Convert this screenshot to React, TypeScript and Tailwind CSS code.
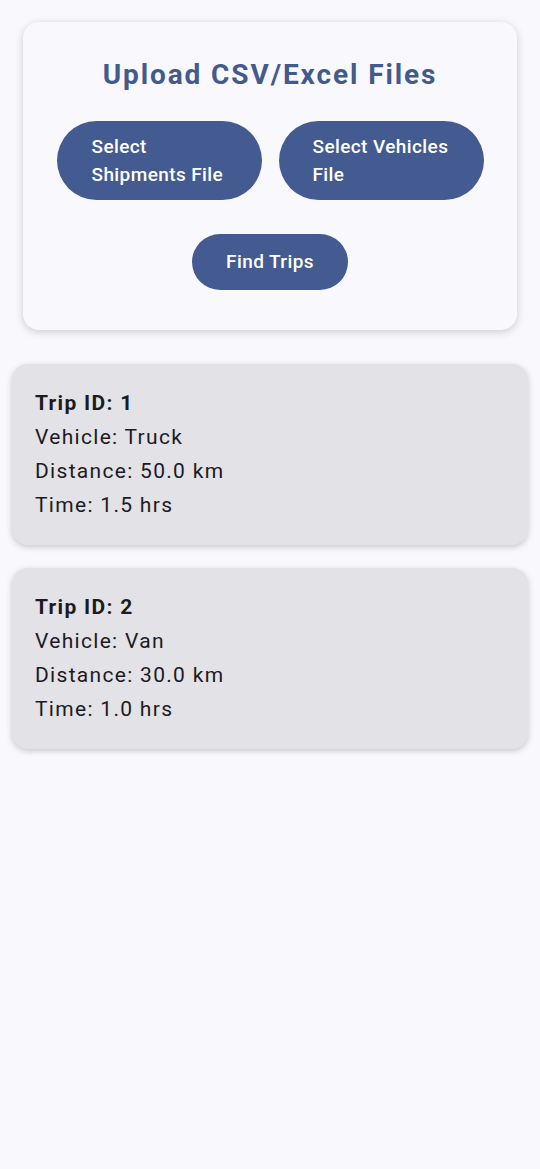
import React from 'react';

type Trip = { id: number; vehicle: string; distance: string; time: string };

const TRIPS: Trip[] = [
  { id: 1, vehicle: 'Truck', distance: '50.0 km', time: '1.5 hrs' },
  { id: 2, vehicle: 'Van', distance: '30.0 km', time: '1.0 hrs' },
];

const App: React.FC = () => {
  return (
    <div className="min-h-[1169px] w-full bg-[#f9f8fd] px-3 pt-[22px] font-['Roboto',sans-serif]">
      {/* Upload panel */}
      <div className="mx-[11px] rounded-[16px] bg-[#f9f8fd] px-[33px] pt-[36px] pb-[40px] shadow-[0_2px_8px_rgba(0,0,0,0.18)]">
        <h1 className="text-center text-[28px] leading-[34px] font-bold tracking-[1.9px] text-[#425a8c]">Upload CSV/Excel Files</h1>
        <div className="mt-[29px] flex justify-center gap-[17px]">
          <button className="h-[79px] w-[205px] rounded-full bg-[#435b91] pl-[35px] pr-4 text-left text-[19px] leading-[28px] font-medium tracking-[0.4px] text-white">
            Select<br />Shipments File
          </button>
          <button className="h-[79px] w-[205px] rounded-full bg-[#435b91] pl-[34px] pr-2 text-left text-[19px] leading-[28px] font-medium tracking-[0.4px] text-white">
            Select Vehicles<br />File
          </button>
        </div>
        <div className="mt-[34px] flex justify-center">
          <button className="h-[56px] w-[156px] rounded-full bg-[#435b91] text-[19px] font-medium tracking-[0.4px] text-white">
            Find Trips
          </button>
        </div>
      </div>

      {/* Trip results */}
      <div className="mt-[34px] flex flex-col gap-[23px]">
        {TRIPS.map((trip) => (
          <div
            key={trip.id}
            className="rounded-[16px] bg-[#e3e2e7] px-[23px] pt-[22px] pb-[23px] text-[21px] leading-[34px] tracking-[1.3px] text-[#1c1b1f] shadow-[0_2px_6px_rgba(0,0,0,0.2)]"
          >
            <p className="font-bold">Trip ID: {trip.id}</p>
            <p>Vehicle: {trip.vehicle}</p>
            <p>Distance: {trip.distance}</p>
            <p>Time: {trip.time}</p>
          </div>
        ))}
      </div>
    </div>
  );
};

export default App;
